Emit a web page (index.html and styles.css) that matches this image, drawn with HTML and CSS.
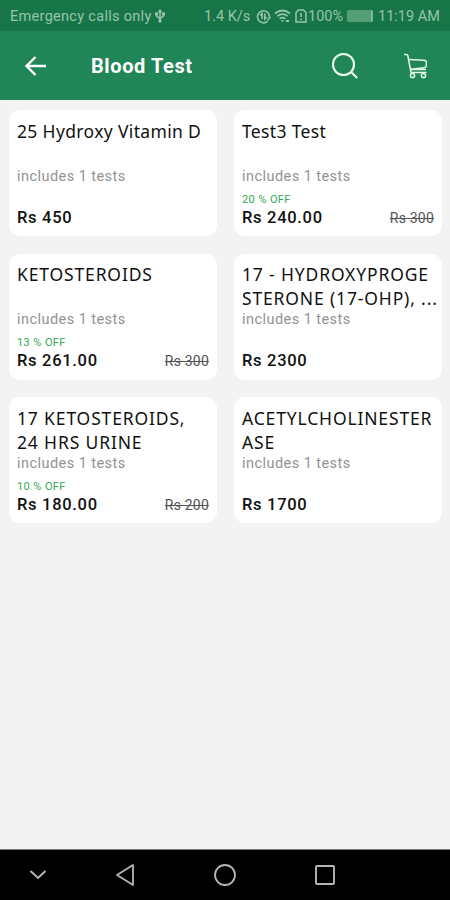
FILE: index.html
```html
<!DOCTYPE html>
<html lang="en">
<head>
  <meta charset="UTF-8" />
  <meta name="viewport" content="width=device-width, initial-scale=1.0" />
  <title>Blood Test</title>
  <link rel="stylesheet" href="styles.css">
</head>
<body>
  <div class="status-bar">
    <span class="carrier">Emergency calls only</span>
    <svg class="usb" width="10" height="14" viewBox="0 0 10 14" fill="none" stroke="currentColor" stroke-width="1.5">
      <path d="M5 2v10M1.500 5v2L5 9.500 8.500 7V5"/>
      <path d="M5 0l2.500 3.500h-5zM0 3.500h3v3H0zM7 3.500h3v3H7zM3.500 10.500h3v3h-3z" fill="currentColor" stroke="none"/>
    </svg>
    <span class="speed">1.4 K/s</span>
    <svg class="sync" width="15" height="15" viewBox="0 0 15 15" fill="none" stroke="currentColor" stroke-width="1.6">
      <path d="M11.500 12.300A6 6 0 1 1 13.500 8M14.300 8l-3 3.500"/>
      <path d="M6 10V4.500L4.200 6.500M8.800 4.500V10l1.900-2"/>
    </svg>
    <svg class="wifi" width="17" height="14" viewBox="0 0 17 14" fill="none" stroke="currentColor" stroke-width="1.7">
      <path d="M1 4.500Q8.500-1.500 16 4.500M3.300 7.200Q8.500 3 13.700 7.200M5.600 9.800Q8.500 7.500 11.400 9.800"/>
      <path d="M6.800 11.200h3.400L8.500 13.200zM12 11h3v2h-3z" fill="currentColor" stroke="none"/>
    </svg>
    <svg class="sim" width="12" height="14" viewBox="0 0 12 14" fill="none" stroke="currentColor" stroke-width="1.500">
      <path d="M3.500 1h5L11 3.500V13H1V3.500zM6 4v4M6 9.500v1.700"/>
    </svg>
    <span class="percent">100%</span>
    <span class="battery"></span>
    <span class="time">11:19 AM</span>
  </div>

  <header class="app-bar">
    <svg class="back" width="22" height="20" viewBox="0 0 22 20" fill="none" stroke="#fff" stroke-width="2.300">
      <path d="M21 10H2M10.500 1L1.500 10l9 9"/>
    </svg>
    <h1>Blood Test</h1>
    <svg class="search" width="28" height="28" viewBox="0 0 28 28" fill="none" stroke="#e9fff1" stroke-width="2.100">
      <circle cx="12.500" cy="12.500" r="10.500"/>
      <path d="M20 20l6.300 6"/>
    </svg>
    <svg class="cart" width="26" height="26" viewBox="0 0 26 26" fill="none" stroke="#dff8e8" stroke-width="1.500">
      <path d="M1 1.500h2.500q1 0 1.300 1L8 19.500h15.500"/>
      <path d="M6 6.500l15 .800q2.300.200 2.300 2v3.500q0 1.700-2 1.900L7.500 16.200M7.500 16.500h15.500"/>
      <circle cx="9.500" cy="22.500" r="2.100"/>
      <circle cx="20.500" cy="22.500" r="2.100"/>
    </svg>
  </header>

  <main class="tests">
    <article class="card">
      <h2 class="mixed">25 Hydroxy Vitamin D</h2>
      <p class="includes">includes 1 tests</p>
      <p class="off"></p>
      <div class="price-row"><span class="price">Rs 450</span></div>
    </article>
    <article class="card">
      <h2 class="mixed">Test3 Test</h2>
      <p class="includes">includes 1 tests</p>
      <p class="off">20 % OFF</p>
      <div class="price-row"><span class="price">Rs 240.00</span><del>Rs 300</del></div>
    </article>
    <article class="card">
      <h2>KETOSTEROIDS</h2>
      <p class="includes">includes 1 tests</p>
      <p class="off">13 % OFF</p>
      <div class="price-row"><span class="price">Rs 261.00</span><del>Rs 300</del></div>
    </article>
    <article class="card">
      <h2>17 - HYDROXYPROGE<br>STERONE (17-OHP), ...</h2>
      <p class="includes">includes 1 tests</p>
      <p class="off"></p>
      <div class="price-row"><span class="price">Rs 2300</span></div>
    </article>
    <article class="card">
      <h2>17 KETOSTEROIDS,<br>24 HRS URINE</h2>
      <p class="includes">includes 1 tests</p>
      <p class="off">10 % OFF</p>
      <div class="price-row"><span class="price">Rs 180.00</span><del>Rs 200</del></div>
    </article>
    <article class="card">
      <h2>ACETYLCHOLINESTER<br>ASE</h2>
      <p class="includes">includes 1 tests</p>
      <p class="off"></p>
      <div class="price-row"><span class="price">Rs 1700</span></div>
    </article>
  </main>

  <nav class="nav-bar">
    <svg class="hide" width="18" height="12" viewBox="0 0 18 12" fill="none" stroke="#b5b5b5" stroke-width="2">
      <path d="M1.500 2L9 9l7.500-7"/>
    </svg>
    <svg class="nav-back" width="20" height="24" viewBox="0 0 20 24" fill="none" stroke="#b5b5b5" stroke-width="1.800" stroke-linejoin="round">
      <path d="M18 2v20L2 12z"/>
    </svg>
    <svg class="home" width="24" height="24" viewBox="0 0 24 24" fill="none" stroke="#b5b5b5" stroke-width="1.800">
      <circle cx="12" cy="12" r="10"/>
    </svg>
    <svg class="recent" width="20" height="20" viewBox="0 0 20 20" fill="none" stroke="#b5b5b5" stroke-width="1.900">
      <rect x="1" y="1" width="18" height="18" rx="1"/>
    </svg>
  </nav>
</body>
</html>
```
FILE: styles.css
```css
* {
  margin: 0;
  padding: 0;
  box-sizing: border-box;
}
body {
  height: 900px;
  display: flex;
  flex-direction: column;
  font-family: Roboto, sans-serif;
  background-color: #f3f3f3;
  color: #111;
  overflow: hidden;
}
svg {
  display: block;
  flex: none;
}

/* Status bar */
.status-bar {
  height: 31px;
  padding: 1px 10px 0;
  display: flex;
  align-items: center;
  background-color: #187548;
  color: #94c5aa;
  font-size: 14px;
  white-space: nowrap;
}
.carrier {
  width: 142px;
  font-size: 14.5px;
  letter-spacing: 0.3px;
}
.usb {
  margin-left: 3px;
}
.speed {
  width: 48px;
  margin-left: 39px;
  font-size: 14.500px;
}
.sync {
  margin-left: 4px;
}
.wifi {
  margin-left: 3px;
}
.sim {
  margin-left: 4px;
}
.percent {
  width: 36px;
  margin-left: 1px;
  font-size: 14.500px;
}
.battery {
  width: 26px;
  height: 12px;
  margin-left: 3px;
  border-right: 2px solid #82b99c;
  border-radius: 2px;
  background-color: #56a078;
}
.time {
  margin-left: 5px;
  font-size: 14.500px;
}

/* App bar */
.app-bar {
  height: 69px;
  padding: 0 21px 0 25px;
  display: flex;
  align-items: center;
  background-color: #218657;
}
.app-bar h1 {
  margin-left: 44px;
  font-size: 20px;
  font-weight: 700;
  letter-spacing: 0.6px;
  color: #fff;
}
.search {
  margin-left: auto;
}
.cart {
  margin-left: 44px;
}

/* Test cards */
.tests {
  flex: 1;
  padding: 10px 8px 0 9px;
  display: grid;
  grid-template-columns: 208px 208px;
  grid-auto-rows: 126px;
  gap: 17.7px 17px;
  align-content: start;
}
.card {
  padding: 8.500px 8px 0;
  border-radius: 11px;
  background-color: #fff;
}
.card h2 {
  height: 48px;
  font-family: "Noto Sans", sans-serif;
  font-size: 17.500px;
  font-weight: 400;
  line-height: 24px;
  letter-spacing: 0.85px;
  white-space: nowrap;
}
.card h2.mixed {
  letter-spacing: 0.35px;
}
.includes {
  height: 18px;
  margin-top: 1px;
  font-size: 14.500px;
  line-height: 18px;
  letter-spacing: 0.45px;
  color: #929292;
}
.off {
  height: 14px;
  margin-top: 7px;
  font-size: 11px;
  line-height: 14px;
  letter-spacing: 0.4px;
  color: #35a853;
}
.price-row {
  display: flex;
  justify-content: space-between;
  align-items: center;
  line-height: 22px;
}
.price {
  font-size: 16.500px;
  font-weight: 500;
  letter-spacing: 0.7px;
}
.price-row del {
  font-size: 14px;
  letter-spacing: 0.2px;
  color: #555;
}

/* Navigation bar */
.nav-bar {
  height: 51px;
  padding-left: 29px;
  border-top: 1px solid #777;
  display: flex;
  align-items: center;
  background-color: #000;
}
.nav-back {
  margin-left: 68px;
}
.home {
  margin-left: 78px;
}
.recent {
  margin-left: 78px;
}
```
